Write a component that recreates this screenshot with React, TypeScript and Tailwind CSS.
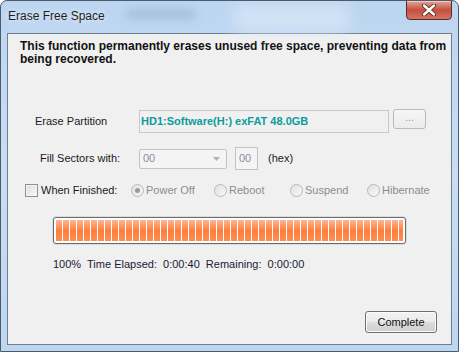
import React from "react";

const SEGMENTS = Array.from({ length: 50 });

function Radio({ checked, label, width }: { checked?: boolean; label: string; width: string }) {
  return (
    <div className={`flex items-center ${width}`}>
      <span className="relative flex h-[13px] w-[13px] items-center justify-center rounded-full border border-[#b9b9b9] bg-gradient-to-br from-[#e2e2e2] to-[#f7f7f7]">
        {checked && <span className="h-[5px] w-[5px] rounded-full bg-[#9a9a9a]" />}
      </span>
      <span className="ml-[2px] text-[#8d8d8d]">{label}</span>
    </div>
  );
}

export default function App() {
  return (
    <div
      className="relative flex h-[352px] w-[459px] flex-col overflow-hidden rounded-t-[7px] border border-[#4b5b6c] bg-gradient-to-b from-[#bcd5f0] via-[#c9def4] to-[#bed6ef] text-[11px] text-[#1a1a1a]"
      style={{ fontFamily: '"Liberation Sans", Arial, sans-serif' }}
    >
      {/* blurred glass reflections */}
      <div className="absolute left-[125px] top-[8px] h-[10px] w-[70px] rounded-full bg-[#9bb6d4] opacity-70 blur-[4px]" />
      <div className="absolute left-[230px] top-[2px] h-[30px] w-[120px] rounded-full bg-[#dbe8f7] opacity-70 blur-[8px]" />

      {/* title bar */}
      <div className="relative flex h-[32px] items-start justify-between">
        <span className="ml-[7px] mt-[6px] text-[12px] text-[#1e1e1e] [text-shadow:0_0_6px_#ffffff]">Erase Free Space</span>
        <button className="mr-[6px] mt-[-1px] flex h-[20px] w-[46px] items-center justify-center rounded-b-[4px] border border-[#5b2b24] bg-gradient-to-b from-[#e6a497] via-[#c24f40] to-[#d47462] shadow-[inset_0_1px_0_#f4c9c0]">
          <svg width="16" height="12" viewBox="0 0 16 12">
            <path d="M3 1.5 L13 10.5 M13 1.5 L3 10.5" stroke="#5a2a22" strokeWidth="4.2" strokeLinecap="round" />
            <path d="M3 1.5 L13 10.5 M13 1.5 L3 10.5" stroke="#ffffff" strokeWidth="2.4" strokeLinecap="round" />
          </svg>
        </button>
      </div>

      {/* client area */}
      <div className="mx-[6px] mb-[6px] flex flex-1 flex-col border border-[#6f7f92] bg-[#f0f0f0]">
        <p className="ml-[12px] mt-[6px] w-[431px] text-[12px] font-bold leading-[13px] text-[#111]">
          This function permanently erases unused free space, preventing data from being recovered.
        </p>

        {/* partition */}
        <div className="mt-[44px] flex h-[23px] items-center">
          <span className="ml-[27px] w-[104px]">Erase Partition</span>
          <div className="flex h-[23px] w-[250px] items-center border border-[#c9c9c9] bg-[#f0f0f0] pl-[1px] font-bold text-[#0d9c9c]">
            HD1:Software(H:) exFAT 48.0GB
          </div>
          <button className="ml-[4px] mt-[-5px] flex h-[20px] w-[33px] items-center justify-center rounded-[3px] border border-[#b9b9b9] bg-gradient-to-b from-[#f6f6f6] to-[#ececec] pb-[3px] text-[#9a9a9a]">
            ...
          </button>
        </div>

        {/* fill sectors */}
        <div className="mt-[14px] flex h-[23px] items-center">
          <span className="ml-[32px] w-[99px]">Fill Sectors with:</span>
          <div className="flex h-[20px] w-[88px] items-center justify-between rounded-[2px] border border-[#c3c3c3] bg-[#f4f4f4] pl-[3px] pr-[6px] text-[#8a8aa0]">
            <span>00</span>
            <svg width="7" height="4" viewBox="0 0 7 4">
              <path d="M0 0 L7 0 L3.5 4 Z" fill="#b2b2b2" />
            </svg>
          </div>
          <div className="ml-[8px] flex h-[23px] w-[23px] items-center border border-[#c3c3c3] bg-[#f4f4f4] pl-[3px] text-[#8a8aa0]">
            00
          </div>
          <span className="ml-[10px]">(hex)</span>
        </div>

        {/* when finished */}
        <div className="mt-[13px] flex h-[14px] items-center">
          <span className="ml-[17px] h-[13px] w-[13px] border border-[#8f8f8f] bg-gradient-to-br from-[#dcdcdc] to-[#f8f8f8] shadow-[inset_0_0_0_1px_#f4f4f4]" />
          <span className="ml-[3px] w-[90px]">When Finished:</span>
          <Radio checked label="Power Off" width="w-[83px]" />
          <Radio label="Reboot" width="w-[76px]" />
          <Radio label="Suspend" width="w-[77px]" />
          <Radio label="Hibernate" width="w-[80px]" />
        </div>

        {/* progress */}
        <div className="ml-[45px] mt-[20px] flex h-[27px] w-[353px] items-stretch rounded-[3px] border border-[#6b6b6b] bg-white p-[2px] shadow-[0_0_0_1px_#dcdcdc]">
          <div className="flex flex-1 gap-px overflow-hidden">
            {SEGMENTS.map((_, i) => (
              <div
                key={i}
                className="w-[6px] shrink-0 bg-gradient-to-b from-[#ffb594] via-[#ff7d3a] to-[#ff8d54]"
              />
            ))}
          </div>
        </div>

        {/* status */}
        <div className="ml-[45px] mt-[14px] whitespace-pre leading-[13px] text-[#1a1a33]">
          {"100%  Time Elapsed:  0:00:40  Remaining:  0:00:00"}
        </div>

        <button className="mb-[11px] mr-[14px] mt-auto flex h-[22px] w-[72px] items-center justify-center self-end rounded-[3px] border border-[#707070] bg-[linear-gradient(to_bottom,#f2f2f2_0%,#ebebeb_50%,#dddddd_51%,#cfcfcf_100%)] text-[#111] shadow-[inset_0_0_0_1px_#fbfbfb]">
          Complete
        </button>
      </div>
    </div>
  );
}
